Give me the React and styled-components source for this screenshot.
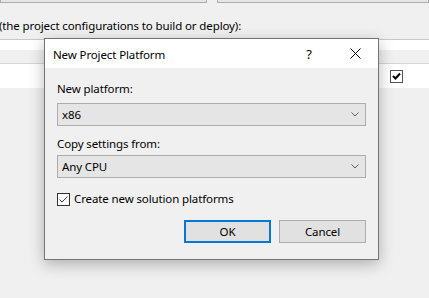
import React from 'react';
import styled, { createGlobalStyle } from 'styled-components';

const GlobalStyle = createGlobalStyle`
  html, body {
    margin: 0;
    padding: 0;
    background: #f0f0f0;
    overflow: hidden;
  }
  body {
    font-family: 'Noto Sans', 'Open Sans', sans-serif;
    font-size: 11.5px;
    letter-spacing: -0.12px;
    color: #000;
  }
`;

const Page = styled.div`
  position: relative;
  width: 429px;
  height: 298px;
  overflow: hidden;
  background: #f0f0f0;
`;

const FieldRow = styled.div`
  display: flex;
  gap: 10px;
  margin-top: -21px;
`;

const Field = styled.div`
  box-sizing: border-box;
  height: 24px;
  width: ${(p) => p.width}px;
  flex: ${(p) => (p.grow ? 1 : 'none')};
  background: #e5e5e5;
  border: 1px solid #adadad;
  padding: 0 4px;
  line-height: 18px;
`;

const Caption = styled.div`
  margin: 15px 0 0 -1px;
  line-height: 16px;
  white-space: nowrap;
`;

const Grid = styled.div`
  margin-top: 5px;
  border-top: 1px solid #c8c8c8;
  background: #fff;
`;

const GridHead = styled.div`
  display: flex;
  height: 10px;
`;

const HeadCell = styled.div`
  width: ${(p) => p.width}px;
  border-right: 1px solid #e0e0e0;
`;

const GridBand = styled.div`
  height: 13px;
  background: #f0f0f0;
  border-bottom: 1px solid #d6d6d6;
`;

const GridRow = styled.div`
  height: 24px;
  display: flex;
  align-items: center;
  justify-content: flex-end;
  padding-right: 26px;
`;

const GridCheck = styled.div`
  box-sizing: border-box;
  width: 13px;
  height: 13px;
  border: 1px solid #555;
  background: #fff;
  display: flex;
  align-items: center;
  justify-content: center;
`;

const Dialog = styled.div`
  position: absolute;
  left: 44px;
  top: 38px;
  width: 335px;
  box-sizing: border-box;
  border: 1px solid #747474;
  background: #f0f0f0;
  box-shadow: 0 4px 14px rgba(0, 0, 0, 0.28);
`;

const TitleBar = styled.div`
  height: 29px;
  background: #fff;
  display: flex;
  align-items: center;
`;

const Title = styled.div`
  flex: 1;
  padding: 2px 0 0 8px;
  line-height: 16px;
`;

const TitleButton = styled.div`
  width: 46px;
  height: 29px;
  display: flex;
  align-items: center;
  justify-content: center;
  font-size: 13px;
`;

const Body = styled.div`
  padding: 13px 12px 16px 12px;
  display: flex;
  flex-direction: column;
`;

const Label = styled.div`
  line-height: 16px;
  margin-top: ${(p) => p.top || 0}px;
`;

const Combo = styled.div`
  box-sizing: border-box;
  height: 23px;
  margin-top: ${(p) => p.top || 0}px;
  background: #e5e5e5;
  border: 1px solid #adadad;
  display: flex;
  align-items: center;
  padding: 0 6px 0 4px;
`;

const ComboText = styled.span`
  flex: 1;
`;

const CheckRow = styled.label`
  display: flex;
  align-items: center;
  gap: 4px;
  margin-top: 13px;
  line-height: 16px;
`;

const Box = styled.span`
  box-sizing: border-box;
  width: 13px;
  height: 13px;
  border: 1px solid #333;
  background: #fff;
  display: flex;
  align-items: center;
  justify-content: center;
`;

const Buttons = styled.div`
  display: flex;
  justify-content: flex-end;
  gap: 8px;
  margin-top: 13px;
`;

const Button = styled.div`
  box-sizing: border-box;
  width: 87px;
  height: 23px;
  background: #e1e1e1;
  border: ${(p) => (p.primary ? '2px solid #0078d7' : '1px solid #adadad')};
  display: flex;
  align-items: center;
  justify-content: center;
`;

const Chevron = () => (
  <svg width="8" height="5" viewBox="0 0 8 5">
    <path d="M0.5 0.5 L4 4 L7.5 0.5" fill="none" stroke="#606060" strokeWidth="1" />
  </svg>
);

const CloseIcon = () => (
  <svg width="11" height="11" viewBox="0 0 11 11">
    <path d="M0.5 0.5 L10.5 10.5 M10.5 0.5 L0.5 10.5" stroke="#000" strokeWidth="1" />
  </svg>
);

const ThinCheck = () => (
  <svg width="11" height="11" viewBox="0 0 11 11">
    <path d="M1.5 5.5 L4 8 L9.5 2.5" fill="none" stroke="#333" strokeWidth="1" />
  </svg>
);

const BoldCheck = () => (
  <svg width="9" height="8" viewBox="0 0 9 8">
    <path d="M1 4 L3.5 6.5 L8 1.5" fill="none" stroke="#000" strokeWidth="2" />
  </svg>
);

export default function App() {
  return (
    <Page>
      <GlobalStyle />
      <FieldRow>
        <Field width={207} />
        <Field grow>Any CPU</Field>
      </FieldRow>
      <Caption>(the project configurations to build or deploy):</Caption>
      <Grid>
        <GridHead>
          <HeadCell width={213} />
        </GridHead>
        <GridBand />
        <GridRow>
          <GridCheck>
            <BoldCheck />
          </GridCheck>
        </GridRow>
      </Grid>

      <Dialog>
        <TitleBar>
          <Title>New Project Platform</Title>
          <TitleButton>?</TitleButton>
          <TitleButton>
            <CloseIcon />
          </TitleButton>
        </TitleBar>
        <Body>
          <Label>New platform:</Label>
          <Combo top={6}>
            <ComboText>x86</ComboText>
            <Chevron />
          </Combo>
          <Label top={10}>Copy settings from:</Label>
          <Combo top={3}>
            <ComboText>Any CPU</ComboText>
            <Chevron />
          </Combo>
          <CheckRow>
            <Box>
              <ThinCheck />
            </Box>
            Create new solution platforms
          </CheckRow>
          <Buttons>
            <Button primary>OK</Button>
            <Button>Cancel</Button>
          </Buttons>
        </Body>
      </Dialog>
    </Page>
  );
}
